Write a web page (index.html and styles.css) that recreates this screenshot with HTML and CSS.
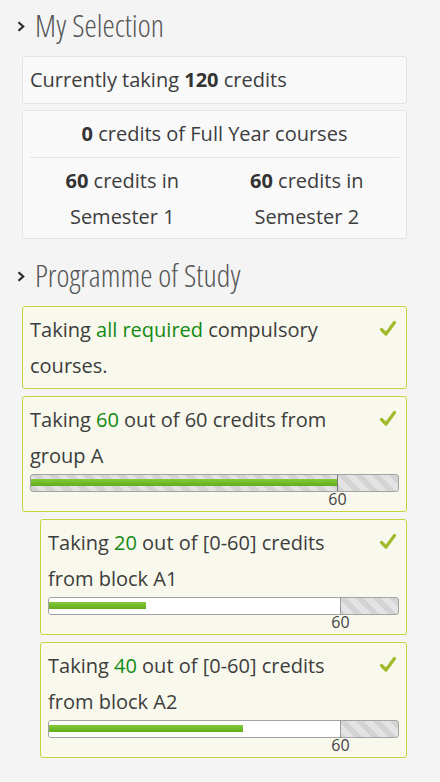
FILE: index.html
```html
<!DOCTYPE html>
<html lang="en">
<head>
<meta charset="utf-8">
<title>My Selection</title>
<link rel="stylesheet" href="styles.css">
</head>
<body>
<div class="panel">
  <h2 class="section-title">
    <svg class="chev" width="8" height="11" viewBox="0 0 8 11"><path d="M1.5 1.2 L6.2 5.5 L1.5 9.8" fill="none" stroke="#2a2a2a" stroke-width="2.2"/></svg>
    <span class="title-text">My Selection</span>
  </h2>
  <div class="box">Currently taking <b>120</b> credits</div>
  <div class="box box-split">
    <div class="full-year"><b>0</b> credits of Full Year courses</div>
    <div class="divider"></div>
    <div class="semesters">
      <div class="sem"><b>60</b> credits in<br>Semester 1</div>
      <div class="sem"><b>60</b> credits in<br>Semester 2</div>
    </div>
  </div>

  <h2 class="section-title second">
    <svg class="chev" width="8" height="11" viewBox="0 0 8 11"><path d="M1.5 1.2 L6.2 5.5 L1.5 9.8" fill="none" stroke="#2a2a2a" stroke-width="2.2"/></svg>
    <span class="title-text">Programme of Study</span>
  </h2>

  <div class="req">
    <svg class="check" width="18" height="18" viewBox="0 0 18 18"><path d="M2.5 9.5 L7 14 L15.5 2.5" fill="none" stroke="#a2b92b" stroke-width="3.2" stroke-linecap="round" stroke-linejoin="round"/></svg>
    <p class="req-text">Taking <span class="ok">all required</span> compulsory courses.</p>
  </div>

  <div class="req">
    <svg class="check" width="18" height="18" viewBox="0 0 18 18"><path d="M2.5 9.5 L7 14 L15.5 2.5" fill="none" stroke="#a2b92b" stroke-width="3.2" stroke-linecap="round" stroke-linejoin="round"/></svg>
    <p class="req-text">Taking <span class="ok">60</span> out of 60 credits from group A</p>
    <div class="bar">
      <div class="track">
        <div class="fill" style="width:83.33%"></div>
        <div class="marker" style="left:83.33%"></div>
      </div>
      <div class="bar-labels"><span class="bar-label" style="left:83.33%">60</span></div>
    </div>
  </div>

  <div class="req sub">
    <svg class="check" width="18" height="18" viewBox="0 0 18 18"><path d="M2.5 9.5 L7 14 L15.5 2.5" fill="none" stroke="#a2b92b" stroke-width="3.2" stroke-linecap="round" stroke-linejoin="round"/></svg>
    <p class="req-text">Taking <span class="ok">20</span> out of [0-60] credits from block A1</p>
    <div class="bar">
      <div class="track">
        <div class="allowed" style="width:83.33%"></div>
        <div class="fill" style="width:27.78%"></div>
      </div>
      <div class="bar-labels"><span class="bar-label" style="left:83.33%">60</span></div>
    </div>
  </div>

  <div class="req sub">
    <svg class="check" width="18" height="18" viewBox="0 0 18 18"><path d="M2.5 9.5 L7 14 L15.5 2.5" fill="none" stroke="#a2b92b" stroke-width="3.2" stroke-linecap="round" stroke-linejoin="round"/></svg>
    <p class="req-text">Taking <span class="ok">40</span> out of [0-60] credits from block A2</p>
    <div class="bar">
      <div class="track">
        <div class="allowed" style="width:83.33%"></div>
        <div class="fill" style="width:55.56%"></div>
      </div>
      <div class="bar-labels"><span class="bar-label" style="left:83.33%">60</span></div>
    </div>
  </div>
</div>
</body>
</html>
```

FILE: styles.css
```css
html, body {
  margin: 0;
  padding: 0;
}

body {
  background: #f4f4f4;
  font-family: "Open Sans", sans-serif;
  font-size: 20px;
  color: #3d3d3d;
}

.panel {
  width: 385px;
  margin-left: 22px;
  padding-top: 5px;
}

.section-title {
  display: flex;
  align-items: center;
  height: 40px;
  margin: 0 0 11px -5px;
  font-family: "Open Sans", sans-serif;
  font-weight: 300;
  font-stretch: 75%;
  font-size: 31px;
  color: #555;
}

.section-title.second {
  margin-top: 16px;
}

.chev {
  flex: none;
  margin-right: 10px;
  margin-top: 2px;
}

.title-text {
  line-height: 40px;
}

.box {
  background: #f9f9f9;
  border: 1px solid #e4e4e4;
  border-radius: 3px;
  padding: 5px 7px;
  line-height: 36px;
  margin-bottom: 6px;
}

.box b,
.box-split b {
  font-weight: 700;
  color: #333;
}

.box-split {
  padding-bottom: 3px;
}

.full-year {
  text-align: center;
}

.divider {
  height: 1px;
  background: #e4e4e4;
  margin: 5px 0 5px;
}

.semesters {
  display: grid;
  grid-template-columns: 1fr 1fr;
  text-align: center;
}

.req {
  background: #f8f8ec;
  border: 1px solid #c6d33c;
  border-radius: 3px;
  padding: 5px 7px 4px;
  margin-bottom: 7px;
}

.req.sub {
  margin-left: 18px;
}

.check {
  float: right;
  margin-top: 8px;
  margin-right: 2px;
}

.req-text {
  margin: 0;
  line-height: 36px;
  padding-right: 30px;
}

.ok {
  color: #138a13;
}

.bar {
  clear: both;
}

.track {
  position: relative;
  height: 16px;
  border: 1px solid #a3a3a3;
  border-radius: 3px;
  overflow: hidden;
  background: repeating-linear-gradient(45deg, #d3d3d3 0 6px, #e3e3e3 6px 12px);
}

.allowed {
  position: absolute;
  left: 0;
  top: 0;
  bottom: 0;
  background: #fff;
  border-right: 1px solid #9a9a9a;
}

.fill {
  position: absolute;
  left: 0;
  top: 4px;
  height: 7px;
  background: linear-gradient(#86c93c, #62ac1b);
}

.marker {
  position: absolute;
  top: 0;
  bottom: 0;
  width: 1px;
  background: #777;
}

.bar-labels {
  position: relative;
  height: 15px;
}

.bar-label {
  position: absolute;
  top: 0;
  transform: translateX(-50%);
  font-size: 16px;
  line-height: 15px;
  color: #444;
}
```
